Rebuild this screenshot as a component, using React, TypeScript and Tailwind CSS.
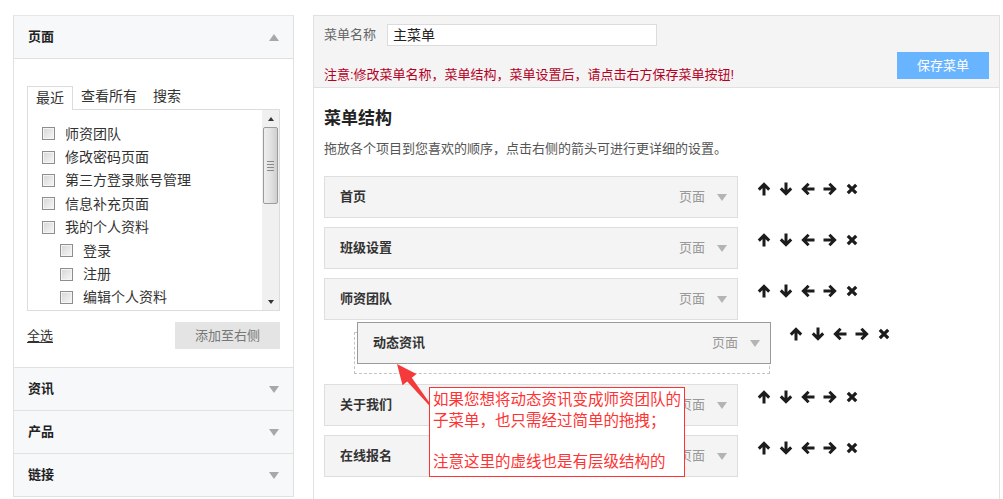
const font = "font-['Liberation_Sans','Noto_Sans_CJK_SC',sans-serif]";

function TriDown({ color = "border-t-[#a8a8a8]" }: { color?: string }) {
  return <span className={`inline-block w-0 h-0 border-l-[5px] border-r-[5px] border-t-[7px] border-l-transparent border-r-transparent ${color}`} />;
}

function TriUp() {
  return <span className="inline-block w-0 h-0 border-l-[5px] border-r-[5px] border-b-[7px] border-l-transparent border-r-transparent border-b-[#a8a8a8]" />;
}

function Check({ label, nested }: { label: string; nested?: boolean }) {
  return (
    <div className={`flex items-center h-[23.4px] ${nested ? "pl-[32px]" : "pl-[14px]"}`}>
      <span className="w-[13px] h-[13px] border border-[#8e8e8e] bg-gradient-to-br from-[#d6d6d6] to-[#f7f7f7] shadow-[inset_0_0_0_1px_#f4f4f4]" />
      <span className="ml-[10px] text-[14px] leading-[18px] text-[#333]">{label}</span>
    </div>
  );
}

function Section({ title }: { title: string }) {
  return (
    <div className="h-[43px] border-t border-[#e1e1e1] bg-[#f7f8fa] flex items-center justify-between pl-[14px] pr-[14px]">
      <span className="text-[13px] font-bold text-[#222]">{title}</span>
      <TriDown />
    </div>
  );
}

// bold arrow glyphs as in the reference toolbar
const arrows = [
  "M7 13.5V2.5M1.8 7.6L7 2.4l5.2 5.2",
  "M7 0.5v11M1.8 6.4L7 11.6l5.2-5.2",
  "M13.5 7H2.5M7.6 1.8L2.4 7l5.2 5.2",
  "M0.5 7h11M6.4 1.8L11.6 7l-5.2 5.2",
  "M2.8 2.8l8.4 8.4M11.2 2.8l-8.4 8.4",
];

function Tools() {
  return (
    <div className="flex items-center gap-[8px]">
      {arrows.map((d, i) => (
        <svg key={i} width="14" height="14" viewBox="0 0 14 14" fill="none" stroke="#1c1c1c" strokeWidth={i === 4 ? 3.2 : 3}>
          <path d={d} />
        </svg>
      ))}
    </div>
  );
}

function MenuItem({ title, dragging }: { title: string; dragging?: boolean }) {
  return (
    <div
      className={`w-[414px] h-[42px] bg-[#f4f4f4] border flex items-center justify-between pl-[15px] pr-[10px] ${
        dragging ? "border-[#9a9a9a]" : "border-[#dedede]"
      }`}
    >
      <span className="text-[13px] font-bold text-[#333]">{title}</span>
      <div className="flex items-center gap-[12px]">
        <span className="text-[13px] text-[#999]">页面</span>
        <TriDown color="border-t-[#b4b4b4]" />
      </div>
    </div>
  );
}

function Row({ title }: { title: string }) {
  return (
    <div className="flex items-start gap-[19px]">
      <MenuItem title={title} />
      <div className="pt-[6px]">
        <Tools />
      </div>
    </div>
  );
}

export default function App() {
  return (
    <div className={`relative h-[499px] overflow-hidden bg-white flex items-start gap-[19px] pl-[13px] pt-[15px] ${font}`}>
      {/* left: page picker */}
      <div className="w-[281px] border border-[#e1e1e1] border-t-[#e6e6e6]">
        <div className="h-[43px] bg-[#f7f8fa] border-b border-[#e1e1e1] flex items-center justify-between pl-[14px] pr-[14px]">
          <span className="text-[13px] font-bold text-[#222]">页面</span>
          <TriUp />
        </div>
        <div className="px-[13px] pt-[26px] pb-[18px]">
          <div className="flex items-end h-[24px] text-[14px] leading-[18px] text-[#333]">
            <div className="h-[24px] px-[8px] pb-[2px] border border-b-0 border-[#dcdcdc] bg-white flex items-center relative top-[1px]">最近</div>
            <div className="px-[8px] pb-[2px] flex items-center h-[24px]">查看所有</div>
            <div className="px-[8px] pb-[2px] flex items-center h-[24px]">搜索</div>
          </div>
          <div className="h-[202px] border border-[#dcdcdc] bg-white flex">
            <div className="flex-1 pt-[12px]">
              <Check label="师资团队" />
              <Check label="修改密码页面" />
              <Check label="第三方登录账号管理" />
              <Check label="信息补充页面" />
              <Check label="我的个人资料" />
              <Check label="登录" nested />
              <Check label="注册" nested />
              <Check label="编辑个人资料" nested />
            </div>
            <div className="w-[17px] bg-[#f0f0f0] flex flex-col items-center">
              <div className="h-[17px] flex items-center justify-center">
                <span className="w-0 h-0 border-l-[3px] border-r-[3px] border-b-[4px] border-l-transparent border-r-transparent border-b-[#333]" />
              </div>
              <div className="w-[15px] h-[77px] rounded-[2px] border border-[#9c9c9c] bg-gradient-to-r from-[#eeeeee] via-[#e2e2e2] to-[#cfcfcf] flex flex-col items-center justify-center gap-[2px]">
                <span className="w-[7px] h-px bg-[#8a8a8a]" />
                <span className="w-[7px] h-px bg-[#8a8a8a]" />
                <span className="w-[7px] h-px bg-[#8a8a8a]" />
                <span className="w-[7px] h-px bg-[#8a8a8a]" />
              </div>
              <div className="flex-1" />
              <div className="h-[17px] flex items-center justify-center">
                <span className="w-0 h-0 border-l-[3px] border-r-[3px] border-t-[4px] border-l-transparent border-r-transparent border-t-[#333]" />
              </div>
            </div>
          </div>
          <div className="flex items-center justify-between mt-[11px]">
            <span className="text-[13px] text-[#333] underline underline-offset-2">全选</span>
            <div className="w-[105px] h-[27px] bg-[#e4e4e4] flex items-center justify-center text-[13px] text-[#777]">添加至右侧</div>
          </div>
        </div>
        <Section title="资讯" />
        <Section title="产品" />
        <Section title="链接" />
      </div>

      {/* right: menu structure */}
      <div className="w-[687px] h-[520px] border border-[#e1e1e1]">
        <div className="bg-[#f4f4f4] border-b border-[#e1e1e1] px-[10px] pt-[8px] pb-[4px]">
          <div className="flex items-center gap-[11px]">
            <span className="text-[13px] text-[#666]">菜单名称</span>
            <div className="w-[270px] h-[22px] bg-white border border-[#dcdcdc] flex items-center pl-[5px] text-[14px] text-[#222]">主菜单</div>
          </div>
          <div className="flex justify-between items-start mt-[6px]">
            <span className="pt-[14px] text-[13px] leading-[17px] text-[#b5001f]">注意:修改菜单名称，菜单结构，菜单设置后，请点击右方保存菜单按钮!</span>
            <div className="w-[92px] h-[27px] bg-[#69b4ff] flex items-center justify-center text-[13px] text-white">保存菜单</div>
          </div>
        </div>
        <div className="px-[10px] pt-[19px]">
          <div className="text-[17px] leading-[24px] font-bold text-[#222]">菜单结构</div>
          <div className="mt-[9px] text-[13px] leading-[18px] text-[#555]">拖放各个项目到您喜欢的顺序，点击右侧的箭头可进行更详细的设置。</div>
          <div className="mt-[18px] flex flex-col gap-[9px]">
            <Row title="首页" />
            <Row title="班级设置" />
            <Row title="师资团队" />
          </div>
          {/* drop placeholder with the item being dragged */}
          <div className="relative ml-[30px] mt-[12px] w-[416px] h-[42px] border border-dashed border-[#c4c4c4]">
            <div className="absolute left-[2px] top-[-11px] flex items-start gap-[18px]">
              <MenuItem title="动态资讯" dragging />
              <div className="pt-[5px]">
                <Tools />
              </div>
            </div>
          </div>
          <div className="mt-[10px] flex flex-col gap-[9px]">
            <Row title="关于我们" />
            <Row title="在线报名" />
          </div>
        </div>
      </div>

      {/* annotation */}
      <svg className="absolute left-[390px] top-[360px] w-[45px] h-[50px]" viewBox="390 360 45 50">
        <polygon
          points="397,364 416.5,374 411.8,377.7 430.4,403.9 428.8,405.1 407.2,381.5 402.5,385.2"
          fill="#f43a3a"
        />
      </svg>
      <div className="absolute left-[429px] top-[387px] w-[256px] h-[90px] border border-[#f33] bg-white pl-[3px] pt-[2px] text-[15.5px] leading-[20.5px] text-[#f33] whitespace-nowrap">
        <div>如果您想将动态资讯变成师资团队的</div>
        <div>子菜单，也只需经过简单的拖拽；</div>
        <div>&nbsp;</div>
        <div>注意这里的虚线也是有层级结构的</div>
      </div>
    </div>
  );
}
